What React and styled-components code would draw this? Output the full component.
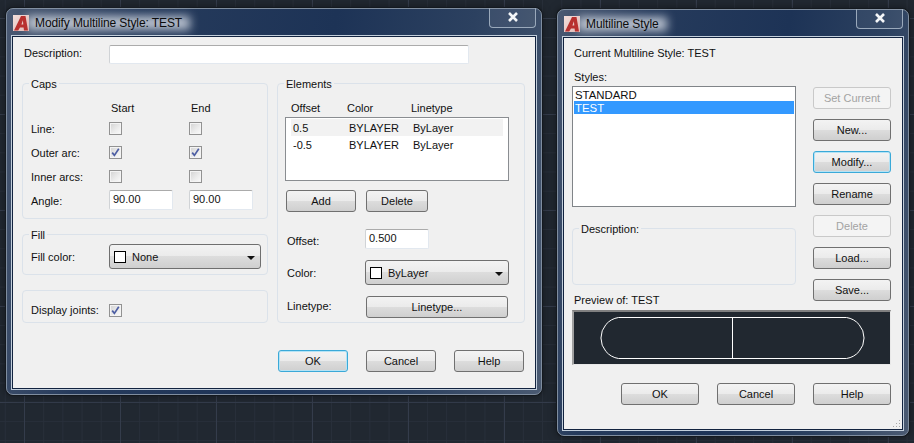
import React from 'react';
import styled, { createGlobalStyle, css } from 'styled-components';

const GlobalStyle = createGlobalStyle`
  html, body {
    margin: 0;
    padding: 0;
    background: #212831;
  }
  * {
    box-sizing: border-box;
  }
`;

const Desktop = styled.div`
  position: relative;
  width: 914px;
  height: 443px;
  overflow: hidden;
  font-family: "Liberation Sans", Arial, sans-serif;
  font-size: 11px;
  line-height: 14px;
  color: #111;
  background-color: #212831;
  background-image:
    linear-gradient(to right, #343c4b 1px, transparent 1px),
    linear-gradient(to bottom, #343c4b 1px, transparent 1px),
    linear-gradient(to right, #282f3a 1px, transparent 1px),
    linear-gradient(to bottom, #282f3a 1px, transparent 1px);
  background-size: 96px 96px, 96px 96px, 19.2px 19.2px, 19.2px 19.2px;
  background-position: 24px 18px, 24px 18px, 24px 18px, 24px 18px;
`;

const Window = styled.div`
  position: absolute;
  left: ${(p) => p.$x}px;
  top: ${(p) => p.$y}px;
  width: ${(p) => p.$w}px;
  height: ${(p) => p.$h}px;
  display: flex;
  flex-direction: column;
  padding: 0 5px 5px;
  border: 1px solid #7f8d9f;
  border-radius: 7px;
  background: linear-gradient(
    100deg,
    #4a5972 0%,
    #263b5c 22%,
    #1d3356 55%,
    #2c4160 78%,
    #4a5a72 100%
  );
  box-shadow: 0 0 0 1px #14191f, 0 0 8px rgba(0, 0, 0, 0.5);
`;

const TitleBar = styled.div`
  position: relative;
  flex: 0 0 27px;
  display: flex;
  align-items: center;
  padding-left: 1px;
  padding-top: 1px;
`;

const TitleGroup = styled.div`
  position: relative;
  z-index: 0;
  display: flex;
  align-items: center;
  gap: 6px;
`;

const TitleText = styled.span`
  position: relative;
  font-size: 12px;
  letter-spacing: -0.1px;
  color: #0c0c0c;

  &::before {
    content: '';
    position: absolute;
    z-index: -1;
    left: -8px;
    right: -8px;
    top: 0;
    bottom: 0;
    background: rgba(222, 228, 236, 0.8);
    filter: blur(5px);
  }
`;

const CloseBox = styled.div`
  position: absolute;
  top: -1px;
  right: 0;
  width: 47px;
  height: 20px;
  display: flex;
  align-items: center;
  justify-content: center;
  padding-bottom: 2px;
  border: 1px solid #9aa9bb;
  border-top: none;
  border-radius: 0 0 4px 4px;
  background: rgba(255, 255, 255, 0.06);
`;

const Client = styled.div`
  position: relative;
  flex: 1;
  display: flex;
  flex-direction: column;
  background: #f0f0f0;
  border: 1px solid #12233f;
  outline: 1px solid #c3cfdc;
  padding: ${(p) => p.$pad};
`;

const Row = styled.div`
  display: flex;
  align-items: center;
  gap: ${(p) => p.$gap || 0}px;
  margin: ${(p) => p.$margin || 0};
`;

const SplitRow = styled.div`
  display: flex;
  align-items: flex-start;
  gap: 17px;
`;

const Label = styled.span`
  flex: 0 0 ${(p) => (p.$w ? `${p.$w}px` : 'auto')};
  display: block;
  white-space: nowrap;
  padding-left: ${(p) => p.$indent || 0}px;
  margin: ${(p) => p.$margin || 0};
`;

const TextInput = styled.div`
  flex: none;
  width: ${(p) => p.$w}px;
  height: ${(p) => p.$h || 20}px;
  padding: 1px 3px;
  background: #fff;
  border: 1px solid #e2e8ef;
  border-top-color: #ababab;
  border-left-color: #d0d3d6;
  border-radius: 2px;
`;

const Columns = styled.div`
  display: flex;
  gap: 9px;
  margin-top: 19px;
`;

const Stack = styled.div`
  display: flex;
  flex-direction: column;
  gap: ${(p) => p.$gap || 0}px;
  margin-top: ${(p) => p.$top || 0}px;
`;

const Group = styled.div`
  position: relative;
  flex: none;
  width: ${(p) => p.$w}px;
  height: ${(p) => p.$h}px;
  padding: ${(p) => p.$pad || 0};
  margin-top: ${(p) => p.$top || 0}px;
  border: 1px solid #dbe2ea;
  border-radius: 4px;
`;

const Legend = styled.span`
  position: absolute;
  top: -7px;
  left: 6px;
  padding: 0 2px;
  background: #f0f0f0;
`;

const CapsGrid = styled.div`
  display: grid;
  grid-template-columns: 78px 80px 64px;
  grid-template-rows: 16px 24px 24px 24px 23px;
  align-items: center;
`;

const ColHead = styled.span`
  padding-left: 2px;
`;

const CapsLabel = styled.span`
  padding-top: 2px;
`;

const CheckBoxBox = styled.span`
  display: flex;
  align-items: center;
  justify-content: center;
  width: 13px;
  height: 13px;
  border: 1px solid #929292;
  background: linear-gradient(135deg, #d2d2d2 0%, #ebebeb 55%, #fbfbfb 100%);
  box-shadow: inset 0 0 0 1px #f4f4f4;
`;

const CheckBox = ({ checked }) => (
  <CheckBoxBox>
    {checked && (
      <svg width="9" height="9" viewBox="0 0 9 9">
        <path d="M1.2 4.6 L3.4 7.4 L7.8 0.8" fill="none" stroke="#4d5ea3" strokeWidth="1.7" />
      </svg>
    )}
  </CheckBoxBox>
);

const ComboBox = styled.div`
  flex: none;
  width: ${(p) => p.$w}px;
  height: 25px;
  display: flex;
  align-items: center;
  gap: 6px;
  padding: 0 5px 0 4px;
  border: 1px solid #6f6f6f;
  border-radius: 3px;
  background: linear-gradient(to bottom, #f3f3f3 0%, #ebebeb 48%, #dddddd 49%, #cfcfcf 100%);
`;

const Swatch = styled.span`
  width: 12px;
  height: 12px;
  border: 1px solid #000;
  background: #fff;
`;

const Arrow = styled.span`
  margin-left: auto;
  margin-top: 2px;
  width: 0;
  height: 0;
  border-left: 4px solid transparent;
  border-right: 4px solid transparent;
  border-top: 4px solid #111;
`;

const PushButton = styled.button`
  flex: none;
  width: ${(p) => p.$w}px;
  height: 22px;
  margin-left: ${(p) => p.$left || 0}px;
  padding: 0;
  font: inherit;
  color: #111;
  border: 1px solid #707070;
  border-radius: 3px;
  background: linear-gradient(to bottom, #f3f3f3 0%, #ebebeb 48%, #dddddd 49%, #cfcfcf 100%);

  ${(p) =>
    p.$active &&
    css`
      border-color: #3aa9d8;
      box-shadow: inset 0 0 0 1px #b5e3f5;
    `}

  &:disabled {
    color: #a3a3a3;
    border-color: #c9c9c9;
    background: #f4f4f4;
  }
`;

const Footer = styled.div`
  display: flex;
  justify-content: flex-end;
  gap: 18px;
  margin-top: ${(p) => p.$top}px;
`;

const ElementHead = styled.div`
  display: grid;
  grid-template-columns: 56px 64px 1fr;
  height: 17px;
  padding: 1px 0 0 6px;
`;

const ElementList = styled.div`
  width: 224px;
  height: 64px;
  padding: 1px 5px;
  background: #fff;
  border: 1px solid #8a8d91;
`;

const ElementRow = styled.div`
  display: grid;
  grid-template-columns: 56px 64px 1fr;
  align-items: center;
  height: 17px;
  padding-left: 2px;
  background: ${(p) => (p.$hot ? '#f2f2f2' : 'transparent')};
`;

const FormGrid = styled.div`
  display: grid;
  grid-template-columns: 80px 144px;
  align-items: center;
  row-gap: 11px;
`;

const StyleList = styled.div`
  width: 224px;
  height: 121px;
  padding: 1px;
  background: #fff;
  border: 1px solid #808488;
`;

const StyleItem = styled.div`
  height: 13px;
  padding-left: 1px;
  line-height: 14px;
  color: ${(p) => (p.$selected ? '#fff' : '#111')};
  background: ${(p) => (p.$selected ? '#3399ff' : 'transparent')};
  font-size: 11.4px;
`;

const Preview = styled.div`
  width: 319px;
  height: 55px;
  margin-top: 3px;
  display: flex;
  align-items: center;
  justify-content: center;
  background: #212830;
  border: 1px solid #e8e8e8;
  border-top: 2px solid #808080;
  border-left: 2px solid #a0a0a0;
`;

const Grip = styled.svg`
  position: absolute;
  right: 1px;
  bottom: 1px;
`;

const AcadLogo = () => (
  <svg width="16" height="16" viewBox="0 0 16 16">
    <defs>
      <linearGradient id="logoBack" x1="0" y1="0" x2="1" y2="1">
        <stop offset="0" stopColor="#f3dedb" />
        <stop offset="1" stopColor="#dfb9b6" />
      </linearGradient>
    </defs>
    <rect width="16" height="16" fill="url(#logoBack)" />
    <path d="M1 15.5 L8 1 L12.5 1 L15 15.5 L11 15.5 L10.6 12.4 L7 12.4 L5.2 15.5 Z M8.4 9.6 L10.3 9.6 L9.9 5.2 Z" fill="#b8302f" fillRule="evenodd" />
  </svg>
);

const CloseGlyph = () => (
  <svg width="12" height="10" viewBox="0 0 12 10">
    <path d="M2 1 L10 9 M10 1 L2 9" stroke="#f4f6f8" strokeWidth="2.6" />
  </svg>
);

const Title = ({ children }) => (
  <TitleBar>
    <TitleGroup>
      <AcadLogo />
      <TitleText>{children}</TitleText>
    </TitleGroup>
    <CloseBox>
      <CloseGlyph />
    </CloseBox>
  </TitleBar>
);

const ModifyDialog = () => (
  <Window $x={6} $y={8} $w={536} $h={387}>
    <Title>Modify Multiline Style: TEST</Title>
    <Client $pad="8px 11px 0 9px">
      <Row>
        <Label $w={87} $indent={2} $margin="-4px 0 0">Description:</Label>
        <TextInput $w={360} $h={19} />
      </Row>
      <Columns>
        <Stack $gap={15}>
          <Group $w={246} $h={136} $pad="16px 0 0 8px">
            <Legend>Caps</Legend>
            <CapsGrid>
              <span />
              <ColHead>Start</ColHead>
              <ColHead>End</ColHead>
              <CapsLabel>Line:</CapsLabel>
              <CheckBox />
              <CheckBox />
              <CapsLabel>Outer arc:</CapsLabel>
              <CheckBox checked />
              <CheckBox checked />
              <CapsLabel>Inner arcs:</CapsLabel>
              <CheckBox />
              <CheckBox />
              <CapsLabel>Angle:</CapsLabel>
              <TextInput $w={64}>90.00</TextInput>
              <TextInput $w={64}>90.00</TextInput>
            </CapsGrid>
          </Group>
          <Group $w={246} $h={41} $pad="9px 0 0 8px">
            <Legend>Fill</Legend>
            <Row>
              <Label $w={78}>Fill color:</Label>
              <ComboBox $w={152}>
                <Swatch />
                None
                <Arrow />
              </ComboBox>
            </Row>
          </Group>
          <Group $w={246} $h={33} $pad="12px 0 0 8px">
            <Row>
              <Label $w={78}>Display joints:</Label>
              <CheckBox checked />
            </Row>
          </Group>
        </Stack>
        <Group $w={248} $h={240} $pad="16px 0 0 7px">
          <Legend>Elements</Legend>
          <ElementHead>
            <span>Offset</span>
            <span>Color</span>
            <span>Linetype</span>
          </ElementHead>
          <ElementList>
            <ElementRow $hot>
              <span>0.5</span>
              <span>BYLAYER</span>
              <span>ByLayer</span>
            </ElementRow>
            <ElementRow>
              <span>-0.5</span>
              <span>BYLAYER</span>
              <span>ByLayer</span>
            </ElementRow>
          </ElementList>
          <Row $gap={10} $margin="9px 0 17px 1px">
            <PushButton $w={70}>Add</PushButton>
            <PushButton $w={62}>Delete</PushButton>
          </Row>
          <FormGrid>
            <Label $indent={2} $margin="4px 0 0">Offset:</Label>
            <TextInput $w={64}>0.500</TextInput>
            <Label $indent={2}>Color:</Label>
            <ComboBox $w={144}>
              <Swatch />
              ByLayer
              <Arrow />
            </ComboBox>
            <Label $indent={2} $margin="-3px 0 0">Linetype:</Label>
            <PushButton $w={142} $left={1}>Linetype...</PushButton>
          </FormGrid>
        </Group>
      </Columns>
      <Footer $top={27}>
        <PushButton $w={70} $active>OK</PushButton>
        <PushButton $w={70}>Cancel</PushButton>
        <PushButton $w={70}>Help</PushButton>
      </Footer>
    </Client>
  </Window>
);

const StyleDialog = () => (
  <Window $x={557} $y={9} $w={352} $h={427}>
    <Title>Multiline Style</Title>
    <Client $pad="8px 11px 0 8px">
      <Label $indent={2}>Current Multiline Style: TEST</Label>
      <SplitRow>
        <Stack>
          <Label $indent={2} $margin="10px 0 2px">Styles:</Label>
          <StyleList>
            <StyleItem>STANDARD</StyleItem>
            <StyleItem $selected>TEST</StyleItem>
          </StyleList>
          <Group $w={224} $h={57} $top={21}>
            <Legend>Description:</Legend>
          </Group>
          <Label $indent={2} $margin="8px 0 0">Preview of: TEST</Label>
        </Stack>
        <Stack $gap={10} $top={27}>
          <PushButton $w={78} disabled>Set Current</PushButton>
          <PushButton $w={78}>New...</PushButton>
          <PushButton $w={78} $active>Modify...</PushButton>
          <PushButton $w={78}>Rename</PushButton>
          <PushButton $w={78} disabled>Delete</PushButton>
          <PushButton $w={78}>Load...</PushButton>
          <PushButton $w={78}>Save...</PushButton>
        </Stack>
      </SplitRow>
      <Preview>
        <svg width="266" height="44" viewBox="0 0 266 44">
          <path
            d="M19.5 1.5 H247.5 A20.75 20.75 0 0 1 247.5 42.5 H19.5 A20.75 20.75 0 0 1 19.5 1.5 Z M133.5 1.5 V42.5"
            fill="none"
            stroke="#ffffff"
            strokeWidth="1"
          />
        </svg>
      </Preview>
      <Footer $top={18}>
        <PushButton $w={78}>OK</PushButton>
        <PushButton $w={78}>Cancel</PushButton>
        <PushButton $w={78}>Help</PushButton>
      </Footer>
      <Grip width="9" height="9" viewBox="0 0 9 9">
        <path d="M7 1h1v1H7z M4 4h1v1H4z M7 4h1v1H7z M1 7h1v1H1z M4 7h1v1H4z M7 7h1v1H7z" fill="#a8a8a8" />
      </Grip>
    </Client>
  </Window>
);

export default function App() {
  return (
    <Desktop>
      <GlobalStyle />
      <ModifyDialog />
      <StyleDialog />
    </Desktop>
  );
}
